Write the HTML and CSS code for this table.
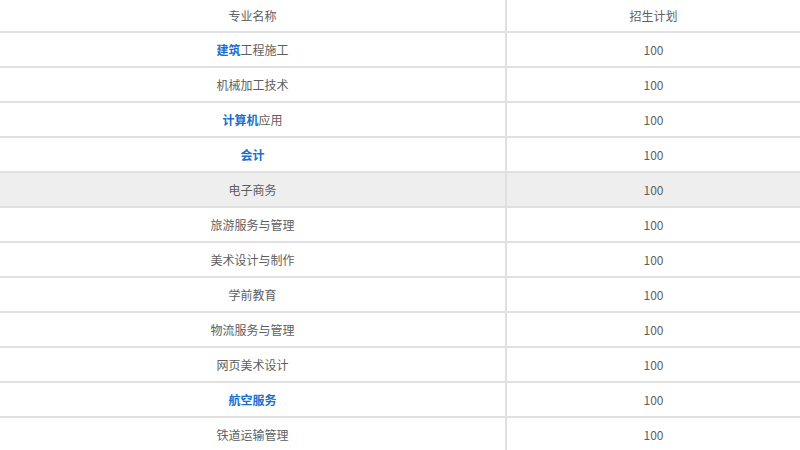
FILE: index.html
```html
<!DOCTYPE html>
<html>
<head>
<meta charset="utf-8">
<link rel="stylesheet" href="styles.css">
</head>
<body>
<div class="table">
  <div class="row head"><div class="cell name">专业名称</div><div class="cell plan">招生计划</div></div>
  <div class="row"><div class="cell name"><span class="hl">建筑</span>工程施工</div><div class="cell plan">100</div></div>
  <div class="row"><div class="cell name">机械加工技术</div><div class="cell plan">100</div></div>
  <div class="row"><div class="cell name"><span class="hl">计算机</span>应用</div><div class="cell plan">100</div></div>
  <div class="row"><div class="cell name"><span class="hl">会计</span></div><div class="cell plan">100</div></div>
  <div class="row active"><div class="cell name">电子商务</div><div class="cell plan">100</div></div>
  <div class="row"><div class="cell name">旅游服务与管理</div><div class="cell plan">100</div></div>
  <div class="row"><div class="cell name">美术设计与制作</div><div class="cell plan">100</div></div>
  <div class="row"><div class="cell name">学前教育</div><div class="cell plan">100</div></div>
  <div class="row"><div class="cell name">物流服务与管理</div><div class="cell plan">100</div></div>
  <div class="row"><div class="cell name">网页美术设计</div><div class="cell plan">100</div></div>
  <div class="row"><div class="cell name"><span class="hl">航空服务</span></div><div class="cell plan">100</div></div>
  <div class="row"><div class="cell name">铁道运输管理</div><div class="cell plan">100</div></div>
</div>
</body>
</html>
```
FILE: styles.css
```css
html, body {
  margin: 0;
  padding: 0;
  background: #fff;
  overflow: hidden;
}
body {
  font-family: "Noto Sans CJK SC", "Liberation Sans", sans-serif;
  font-size: 12px;
  color: #5e5e5e;
}
.table {
  width: 800px;
}
.row {
  display: grid;
  grid-template-columns: 507px 1fr;
  height: 33px;
  border-bottom: 2px solid #e0e0e0;
}
.row.head {
  height: 31px;
}
.row.active {
  background: #eeeeee;
}
.cell {
  display: flex;
  align-items: center;
  justify-content: center;
}
.cell.name {
  border-right: 2px solid #e0e0e0;
}
.hl {
  color: #1a6fcf;
  font-weight: bold;
}
```
